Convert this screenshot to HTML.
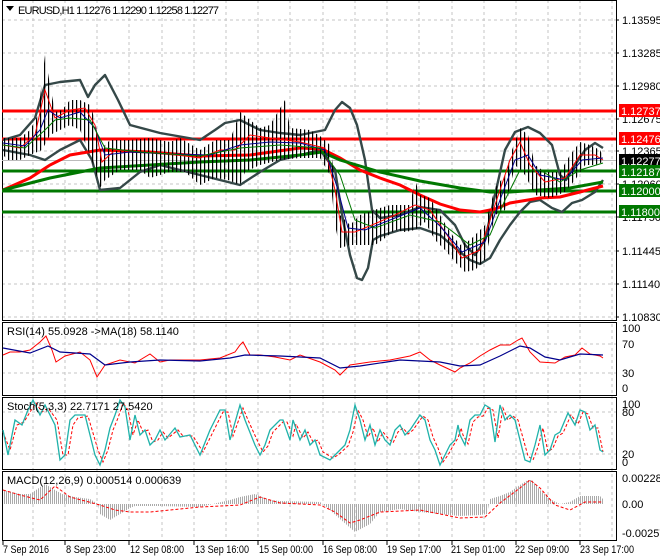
<!DOCTYPE html>
<html><head><meta charset="utf-8"><style>
body{margin:0;background:#fff;width:660px;height:560px;overflow:hidden}
svg{display:block}
text{font-family:"Liberation Sans",sans-serif;font-size:11px;fill:#000}
</style></head><body>
<svg width="660" height="560" viewBox="0 0 660 560" xmlns="http://www.w3.org/2000/svg">
<defs>
<pattern id="stripe" width="4" height="10" patternUnits="userSpaceOnUse"><rect x="0" y="0" width="1.2" height="10" fill="#000"/></pattern>
<pattern id="gstripe" width="2" height="10" patternUnits="userSpaceOnUse"><rect x="0" y="0" width="1" height="10" fill="#aaa"/></pattern>
</defs>
<rect width="660" height="560" fill="#fff"/>
<g stroke="#c4c4c4" stroke-dasharray="3,3" stroke-width="1">
<path d="M2 20H616M2 53H616M2 86H616M2 119H616M2 151H616M2 184H616M2 217H616M2 251H616M2 284H616M2 317H616"/>
<path d="M2 344H616M2 373H616M2 412H616M2 454H616"/>
<path d="M33 0V540M65 0V540M97 0V540M129 0V540M162 0V540M194 0V540M226 0V540M258 0V540M290 0V540M323 0V540M355 0V540M387 0V540M419 0V540M452 0V540M484 0V540M516 0V540M548 0V540M580 0V540M612 0V540"/>
</g>
<g fill="none" stroke="#000" stroke-width="1">
<rect x="2.5" y="0.5" width="614" height="320"/>
<rect x="2.5" y="322.5" width="614" height="73"/>
<rect x="2.5" y="397.5" width="614" height="72"/>
<rect x="2.5" y="471.5" width="614" height="69"/>
</g>
<line x1="2" y1="160.5" x2="616" y2="160.5" stroke="#bbb"/>
<g stroke-width="3">
<line x1="2" y1="111" x2="616" y2="111" stroke="#f00"/>
<line x1="2" y1="139" x2="616" y2="139" stroke="#f00"/>
<line x1="2" y1="171" x2="616" y2="171" stroke="#007800"/>
<line x1="2" y1="191" x2="616" y2="191" stroke="#007800"/>
<line x1="2" y1="212" x2="616" y2="212" stroke="#007800"/>
</g>
<g fill="none" stroke="#354848" stroke-width="2.4" stroke-linejoin="round">
<polyline points="3,140 20,135 35,118 45,85 60,82 80,80 88,97 95,85 105,75 118,100 130,125 160,133 200,140 215,130 225,123 240,120 260,130 280,133 300,135 325,130 335,110 342,102 350,108 357,125 365,160 372,210 380,218 400,215 420,207 440,210 455,225 465,245 475,255 485,240 495,195 505,150 515,132 528,127 540,133 552,145 560,175 566,180 575,165 585,150 595,143 603,148"/>
<polyline points="3,150 30,155 45,160 60,150 80,140 92,160 100,190 120,188 140,172 160,165 200,175 240,185 260,172 280,160 300,155 320,150 335,170 343,220 350,255 357,278 362,280 368,268 373,240 380,236 400,230 420,228 440,235 455,248 470,260 480,264 490,258 500,240 510,225 520,212 530,202 540,200 552,208 562,212 572,203 582,200 595,192 603,180"/>
</g>
<polyline fill="none" stroke="#f00" stroke-width="3" points="3,190 30,178 50,165 70,155 100,150 150,152 200,156 250,155 300,148 322,149 340,158 360,170 380,178 400,185 420,195 440,204 460,210 480,212 495,209 510,203 540,198 560,197 580,192 603,186"/>
<polyline fill="none" stroke="#007800" stroke-width="3" points="3,190 50,178 80,172 100,168 150,165 200,162 250,160 300,155 322,152 340,160 380,172 420,181 460,188 490,192 510,192 540,190 570,188 603,182"/>
<polygon fill="url(#stripe)" points="3,138 20,138 30,130 38,115 45,55 50,85 55,112 62,110 70,100 80,100 90,105 95,120 100,150 110,140 130,140 150,138 170,142 180,138 200,150 215,140 230,140 240,112 250,120 260,128 270,125 285,100 290,128 310,130 320,136 330,145 335,180 340,215 350,225 360,215 380,208 390,205 410,205 415,180 420,195 430,198 440,215 450,232 460,245 470,240 485,225 495,188 505,175 512,150 520,128 528,135 535,165 545,172 560,172 570,155 580,142 590,145 600,150 603,156 603,162 595,165 585,165 575,180 565,192 550,198 535,195 525,175 515,165 505,210 495,215 485,260 475,270 465,272 455,262 445,250 435,240 425,222 415,230 405,232 395,230 385,238 375,245 360,245 350,245 340,248 335,225 330,175 320,158 300,158 280,160 260,165 245,172 240,185 228,180 215,178 200,185 185,172 170,172 150,178 140,170 120,170 105,180 100,188 95,170 88,150 80,130 70,125 60,130 50,135 42,150 30,155 20,160 8,160 3,155"/>
<polyline fill="none" stroke="#f00" stroke-width="1" points="3,145 20,148 35,135 45,90 55,118 70,110 85,108 95,125 102,162 115,150 140,152 170,154 200,158 220,150 235,150 250,135 270,138 300,142 325,148 335,190 342,232 355,232 372,225 395,215 415,205 430,210 445,232 462,258 480,250 495,205 510,160 520,142 530,165 545,182 565,178 580,155 595,155 603,160"/>
<polyline fill="none" stroke="#00008c" stroke-width="1" points="3,143 25,146 40,130 48,110 60,118 80,112 95,128 105,155 130,152 170,154 210,155 240,145 270,142 300,143 325,150 338,190 348,228 365,230 395,218 420,208 440,226 462,252 485,242 500,200 515,160 528,155 540,175 565,180 582,160 603,158"/>
<polyline fill="none" stroke="#007800" stroke-width="1" points="3,145 25,148 45,130 55,120 70,118 90,120 105,148 140,152 200,156 240,148 280,145 320,148 340,175 355,220 375,228 410,215 440,222 470,245 490,235 505,200 520,170 540,170 560,182 580,170 603,163"/>
<g>
<text x="622" y="24">1.13595</text><text x="622" y="57">1.13285</text><text x="622" y="90">1.12980</text>
<text x="622" y="123">1.12675</text><text x="622" y="155">1.12365</text><text x="622" y="188">1.12060</text>
<text x="622" y="221">1.11750</text><text x="622" y="255">1.11445</text><text x="622" y="288">1.11140</text><text x="622" y="321">1.10830</text>
</g>
<g>
<rect x="619" y="104" width="41" height="13" fill="#f00"/><text x="621" y="115" style="fill:#fff">1.12737</text>
<rect x="619" y="132" width="41" height="13" fill="#f00"/><text x="621" y="143" style="fill:#fff">1.12476</text>
<rect x="619" y="154" width="41" height="13" fill="#000"/><text x="621" y="165" style="fill:#fff">1.12277</text>
<rect x="619" y="165" width="41" height="13" fill="#007800"/><text x="621" y="176" style="fill:#fff">1.12187</text>
<rect x="619" y="184" width="41" height="13" fill="#007800"/><text x="621" y="195" style="fill:#fff">1.12000</text>
<rect x="619" y="205" width="41" height="13" fill="#007800"/><text x="621" y="216" style="fill:#fff">1.11800</text>
</g>
<g stroke="#000"><path d="M616 20h3M616 53h3M616 86h3M616 119h3M616 151h3M616 184h3M616 217h3M616 251h3M616 284h3M616 317h3"/></g>
<path d="M6 6h8l-4 5z" fill="#000"/>
<text x="18" y="14" textLength="201" lengthAdjust="spacing">EURUSD,H1  1.12276 1.12290 1.12258 1.12277</text>
<polyline fill="none" stroke="#f00" stroke-width="1" points="3,355 10,352 20,352 30,350 40,342 46,336 52,350 56,362 65,356 80,352 90,360 97,377 105,365 120,360 135,363 150,354 160,362 170,360 200,360 220,358 235,352 240,345 243,342 250,355 260,355 275,357 290,360 300,355 320,362 335,370 340,375 350,365 370,362 390,360 410,356 420,352 430,360 440,365 455,372 460,368 470,363 480,356 490,350 500,345 510,345 518,340 522,338 530,352 540,362 555,363 565,357 575,355 582,348 590,354 600,356 603,358"/>
<polyline fill="none" stroke="#00008c" stroke-width="1.2" points="3,348 30,353 48,346 60,352 90,354 105,365 130,362 160,360 200,361 230,358 245,355 280,356 320,358 340,368 360,366 400,360 440,362 460,366 480,365 500,356 520,346 530,348 545,357 560,360 580,354 603,355"/>
<text x="7" y="335">RSI(14) 55.0928  -&gt;MA(18) 58.1140</text>
<text x="622" y="332">100</text><text x="622" y="348">70</text><text x="622" y="377">30</text><text x="622" y="392">0</text>
<polyline fill="none" stroke="#f00" stroke-width="1" stroke-dasharray="3,2" points="3,432 10,450 17,425 24,422 30,412 36,403 42,412 48,408 57,420 63,455 68,455 73,425 78,418 88,416 98,450 103,462 108,450 113,430 118,418 123,403 128,410 133,435 138,420 143,432 148,430 153,442 158,440 163,432 168,438 178,430 183,436 193,436 203,452 213,432 223,412 228,412 233,436 243,408 248,420 258,442 263,452 268,446 273,432 283,422 287,422 293,436 296,424 303,438 308,432 313,442 318,440 323,452 333,458 338,455 348,446 353,432 358,410 363,420 368,437 373,428 378,442 383,432 388,438 393,443 398,432 403,428 408,434 413,430 423,416 428,420 433,437 438,448 443,462 448,455 453,446 458,438 461,428 463,435 468,444 473,422 478,417 483,416 488,408 493,410 498,438 503,408 508,420 513,416 518,420 528,456 533,460 538,447 543,428 548,452 553,448 558,436 563,433 571,415 578,424 583,412 588,414 593,428 598,428 603,452"/>
<polyline fill="none" stroke="#20b2aa" stroke-width="1.3" points="3,430 8,455 15,420 22,425 28,410 33,400 40,415 45,405 55,425 60,460 65,455 70,420 75,415 85,415 95,455 100,465 105,450 110,428 115,415 120,400 125,407 130,440 135,415 140,435 145,430 150,445 155,440 160,430 165,440 175,428 180,437 190,435 200,455 210,430 220,410 225,410 230,440 240,405 245,420 255,445 260,455 265,445 270,430 280,420 283,420 290,440 293,420 300,440 305,430 310,445 315,440 320,455 330,460 335,455 345,445 350,430 355,405 360,420 365,440 370,425 375,445 380,430 385,440 390,445 395,430 400,425 405,435 410,430 420,415 425,420 430,440 435,450 440,465 445,455 450,445 455,440 458,425 460,435 465,445 470,420 475,415 480,415 485,405 490,408 495,442 500,405 505,420 510,415 515,420 525,460 530,462 535,445 540,425 545,455 550,450 555,435 560,432 568,413 575,425 580,410 585,412 590,430 595,425 600,450 603,452"/>
<text x="7" y="410">Stoch(5,3,3) 22.7171 27.5420</text>
<text x="622" y="408">100</text><text x="622" y="416">80</text><text x="622" y="458">20</text><text x="622" y="466">0</text>
<polygon fill="url(#gstripe)" points="3,504 3,490 20,494 30,494 45,484 55,490 62,494 75,497 90,499 98,504 100,514 110,520 120,514 130,508 135,506 160,506 200,507 230,500 240,497 255,494 270,500 280,501 320,502 330,510 340,519 355,532 370,524 380,512 400,509 420,512 440,514 460,516 480,515 487,514 490,499 500,496 510,492 520,485 528,480 532,480 540,490 550,499 560,504 570,502 580,496 600,496 603,499 603,504"/>
<polyline fill="none" stroke="#f00" stroke-width="1" stroke-dasharray="3,2" points="3,490 20,495 40,500 55,486 70,497 100,505 115,510 130,512 150,512 200,507 240,505 260,497 280,503 320,505 335,512 350,523 360,520 380,512 420,510 460,518 485,517 500,503 520,488 530,480 540,488 555,505 570,510 585,502 603,502"/>
<text x="7" y="484">MACD(12,26,9) 0.000514 0.000639</text>
<text x="622" y="482">0.002288</text><text x="622" y="508">0.00</text><text x="622" y="537">-0.002579</text>
<g stroke="#000"><path d="M3 541v4M65 541v4M129 541v4M194 541v4M258 541v4M323 541v4M387 541v4M452 541v4M516 541v4M580 541v4"/></g>
<g font-size="10.5">
<text x="3" y="553" textLength="46" lengthAdjust="spacingAndGlyphs">7 Sep 2016</text>
<text x="66" y="553" textLength="50" lengthAdjust="spacingAndGlyphs">8 Sep 23:00</text>
<text x="130" y="553" textLength="54" lengthAdjust="spacingAndGlyphs">12 Sep 08:00</text>
<text x="195" y="553" textLength="54" lengthAdjust="spacingAndGlyphs">13 Sep 16:00</text>
<text x="259" y="553" textLength="54" lengthAdjust="spacingAndGlyphs">15 Sep 00:00</text>
<text x="323" y="553" textLength="54" lengthAdjust="spacingAndGlyphs">16 Sep 08:00</text>
<text x="387" y="553" textLength="54" lengthAdjust="spacingAndGlyphs">19 Sep 17:00</text>
<text x="451" y="553" textLength="54" lengthAdjust="spacingAndGlyphs">21 Sep 01:00</text>
<text x="515" y="553" textLength="54" lengthAdjust="spacingAndGlyphs">22 Sep 09:00</text>
<text x="580" y="553" textLength="54" lengthAdjust="spacingAndGlyphs">23 Sep 17:00</text>
</g>
</svg>
</body></html>
